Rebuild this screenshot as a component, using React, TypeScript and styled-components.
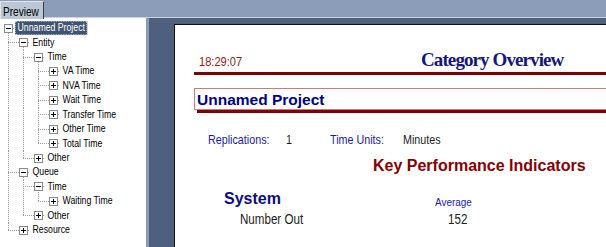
import React from "react";
import styled, { createGlobalStyle, css } from "styled-components";

const SANS = `"Liberation Sans", Arial, sans-serif`;
const SERIF = `"Liberation Serif", "Times New Roman", serif`;

/* the screenshot's UI font is a condensed sans; squeeze Arial metrics to match */
const condensed = css`
  display: inline-block;
  transform: scaleX(0.84);
  transform-origin: 0 50%;
  white-space: nowrap;
`;

const DOT = "#9a9a9a";
const vdots = `repeating-linear-gradient(to bottom, ${DOT} 0 1px, transparent 1px 2px)`;
const hdots = `repeating-linear-gradient(to right, ${DOT} 0 1px, transparent 1px 2px)`;

const Global = createGlobalStyle`
  html, body { margin: 0; padding: 0; width: 606px; height: 247px; overflow: hidden; background: #4e607e; }
  #root { width: 606px; height: 247px; }
  * { box-sizing: border-box; }
`;

const Window = styled.div`
  width: 606px;
  height: 247px;
  display: flex;
  flex-direction: column;
  overflow: hidden;
`;

const TabBar = styled.div`
  height: 18px;
  flex: none;
  background: #8c9dba;
  border-bottom: 1px solid #c9d2df;
  display: flex;
  align-items: flex-start;
`;

const Tab = styled.div`
  position: relative;
  z-index: 2;
  margin-top: 1px;
  height: 18px;
  width: 44px;
  background: #bcc7d6;
  border-top: 1px solid #dfe5ee;
  border-left: 1px solid #dfe5ee;
  border-right: 1px solid #3c3c3c;
  padding-left: 2px;
`;

const TabText = styled.span`
  ${condensed};
  font-family: ${SANS};
  font-size: 12px;
  line-height: 15px;
  color: #000;
`;

const Body = styled.div`
  flex: 1;
  display: flex;
  min-height: 0;
`;

const TreePane = styled.div`
  width: 146px;
  flex: none;
  background: #fff;
  padding: 3px 0 0 4px;
  overflow: hidden;
`;

const Splitter = styled.div`
  width: 3px;
  flex: none;
  background: #8a9bb8;
`;

const PreviewPane = styled.div`
  flex: 1;
  min-width: 0;
  background: #4e607e;
  padding: 6px 0 0 25px;
  display: flex;
`;

const Page = styled.div`
  flex: 1;
  min-width: 0;
  background: #fff;
  border-top: 1px solid #111;
  border-left: 1px solid #111;
  padding: 25px 0 0 19px;
  overflow: hidden;
`;

/* ---------- tree ---------- */

const TreeRow = styled.div`
  display: flex;
  height: 14.43px;
`;

const GuideCell = styled.div<{ $line: boolean }>`
  width: 15px;
  flex: none;
  background: ${(p) => (p.$line ? `${vdots} 4px 0 / 1px 100% no-repeat` : "none")};
`;

const ConnectorCell = styled.div<{ $hasNext: boolean }>`
  width: 15px;
  flex: none;
  background: ${hdots} 4px 50% / 11px 1px no-repeat,
    ${(p) => `${vdots} 4px 0 / 1px ${p.$hasNext ? "100%" : "50%"} no-repeat`};
`;

const BoxCell = styled.div<{ $open: boolean }>`
  width: 9px;
  flex: none;
  display: flex;
  align-items: center;
  background: ${(p) => (p.$open ? `${vdots} 4px 100% / 1px 45% no-repeat` : "none")};
`;

const Stub = styled.div`
  width: 2px;
  flex: none;
  background: ${hdots} 0 50% / 2px 1px no-repeat;
`;

const NodeLabel = styled.span<{ $selected: boolean }>`
  ${condensed};
  align-self: center;
  height: 14px;
  padding: 0 2px;
  font-family: ${SANS};
  font-size: 10.4px;
  line-height: 12px;
  border: 1px dotted ${(p) => (p.$selected ? "#b9c3d3" : "transparent")};
  background: ${(p) => (p.$selected ? "#415373" : "transparent")};
  color: ${(p) => (p.$selected ? "#fff" : "#000")};
`;

const ExpandBox = ({ open }: { open: boolean }) => (
  <svg width="9" height="9" viewBox="0 0 9 9" style={{ display: "block" }}>
    <rect x="0.5" y="0.5" width="8" height="8" fill="#fff" stroke="#8a8a8a" />
    <line x1="2" y1="4.5" x2="7" y2="4.5" stroke="#000" />
    {!open && <line x1="4.5" y1="2" x2="4.5" y2="7" stroke="#000" />}
  </svg>
);

type TreeNode = { label: string; expanded?: boolean; selected?: boolean; children?: TreeNode[] };

const leaves = (labels: string[]): TreeNode[] => labels.map((label) => ({ label }));

const tree: TreeNode = {
  label: "Unnamed Project",
  expanded: true,
  selected: true,
  children: [
    {
      label: "Entity",
      expanded: true,
      children: [
        {
          label: "Time",
          expanded: true,
          children: leaves(["VA Time", "NVA Time", "Wait Time", "Transfer Time", "Other Time", "Total Time"]),
        },
        { label: "Other" },
      ],
    },
    {
      label: "Queue",
      expanded: true,
      children: [
        { label: "Time", expanded: true, children: leaves(["Waiting Time"]) },
        { label: "Other" },
      ],
    },
    { label: "Resource" },
  ],
};

type FlatRow = { node: TreeNode; level: number; guides: boolean[]; hasNext: boolean };

function flatten(node: TreeNode, level: number, guides: boolean[], hasNext: boolean, out: FlatRow[]) {
  out.push({ node, level, guides, hasNext });
  if (node.expanded && node.children) {
    const kids = node.children;
    const childGuides = level >= 1 ? [...guides, hasNext] : [];
    kids.forEach((c, i) => flatten(c, level + 1, childGuides, i < kids.length - 1, out));
  }
}

const rows: FlatRow[] = [];
flatten(tree, 0, [], false, rows);

/* ---------- report ---------- */

const Header = styled.div`
  display: flex;
  align-items: baseline;
  height: 20px;
`;

const ClockCell = styled.span`
  width: 227px;
  flex: none;
  padding-left: 5px;
  line-height: 20px;
`;

const Clock = styled.span`
  ${condensed};
  font-family: ${SANS};
  font-size: 13.2px;
  color: #8e1c1c;
`;

const ReportTitle = styled.span`
  font-family: ${SERIF};
  font-weight: bold;
  font-size: 19px;
  letter-spacing: -0.9px;
  line-height: 20px;
  color: #16167c;
  white-space: nowrap;
`;

const Rule = styled.div`
  height: 3px;
  margin-top: 2px;
  background: #800000;
`;

const ProjectBox = styled.div`
  margin-top: 13px;
  margin-right: -30px;
  height: 22px;
  border: 1px solid #c67d7d;
  box-shadow: 3px 3px 0 #800000;
  padding: 2px 0 0 2px;
  font-family: ${SANS};
  font-weight: bold;
  font-size: 15.5px;
  line-height: 18px;
  color: #000080;
  white-space: nowrap;
`;

const InfoRow = styled.div`
  margin-top: 22px;
  padding-left: 14px;
  display: flex;
  align-items: baseline;
  height: 15px;
  font-family: ${SANS};
  font-size: 12.8px;
  line-height: 15px;
`;

const InfoCell = styled.span<{ $w?: number }>`
  flex: none;
  width: ${(p) => (p.$w ? `${p.$w}px` : "auto")};
`;

const InfoText = styled.span<{ $label?: boolean }>`
  ${condensed};
  color: ${(p) => (p.$label ? "#1b1ba2" : "#1e1e1e")};
`;

const Kpi = styled.div`
  margin-top: 9px;
  padding-left: 179px;
  height: 19px;
  font-family: ${SANS};
  font-weight: bold;
  font-size: 16px;
  line-height: 19px;
  color: #840000;
  white-space: nowrap;
`;

const SectionRow = styled.div`
  margin-top: 14px;
  display: flex;
  align-items: flex-start;
  height: 19px;
`;

const SectionName = styled.span`
  width: 241px;
  flex: none;
  padding-left: 30px;
  font-family: ${SANS};
  font-weight: bold;
  font-size: 16px;
  line-height: 19px;
  color: #0c0c82;
`;

const ColumnHead = styled.span`
  ${condensed};
  margin-top: 6px;
  font-family: ${SANS};
  font-size: 11.8px;
  line-height: 14px;
  color: #1b1ba2;
`;

const MetricRow = styled.div`
  margin-top: 4px;
  display: flex;
  align-items: baseline;
  height: 16px;
  font-family: ${SANS};
  font-size: 13.8px;
  line-height: 16px;
  color: #222;
`;

const MetricName = styled.span`
  width: 254px;
  flex: none;
  padding-left: 46px;
`;

const MetricText = styled.span`
  ${condensed};
`;

export default function App() {
  return (
    <>
      <Global />
      <Window>
        <TabBar>
          <Tab>
            <TabText>Preview</TabText>
          </Tab>
        </TabBar>
        <Body>
          <TreePane>
            {rows.map((r, i) => (
              <TreeRow key={i}>
                {r.guides.map((g, j) => (
                  <GuideCell key={j} $line={g} />
                ))}
                {r.level >= 1 && <ConnectorCell $hasNext={r.hasNext} />}
                <BoxCell $open={!!r.node.expanded}>
                  <ExpandBox open={!!r.node.expanded} />
                </BoxCell>
                <Stub />
                <NodeLabel $selected={!!r.node.selected}>{r.node.label}</NodeLabel>
              </TreeRow>
            ))}
          </TreePane>
          <Splitter />
          <PreviewPane>
            <Page>
              <Header>
                <ClockCell>
                  <Clock>18:29:07</Clock>
                </ClockCell>
                <ReportTitle>Category Overview</ReportTitle>
              </Header>
              <Rule />
              <ProjectBox>Unnamed Project</ProjectBox>
              <InfoRow>
                <InfoCell $w={78}>
                  <InfoText $label>Replications:</InfoText>
                </InfoCell>
                <InfoCell $w={44}>
                  <InfoText>1</InfoText>
                </InfoCell>
                <InfoCell $w={73}>
                  <InfoText $label>Time Units:</InfoText>
                </InfoCell>
                <InfoCell>
                  <InfoText>Minutes</InfoText>
                </InfoCell>
              </InfoRow>
              <Kpi>Key Performance Indicators</Kpi>
              <SectionRow>
                <SectionName>System</SectionName>
                <ColumnHead>Average</ColumnHead>
              </SectionRow>
              <MetricRow>
                <MetricName>
                  <MetricText>Number Out</MetricText>
                </MetricName>
                <MetricText>152</MetricText>
              </MetricRow>
            </Page>
          </PreviewPane>
        </Body>
      </Window>
    </>
  );
}
